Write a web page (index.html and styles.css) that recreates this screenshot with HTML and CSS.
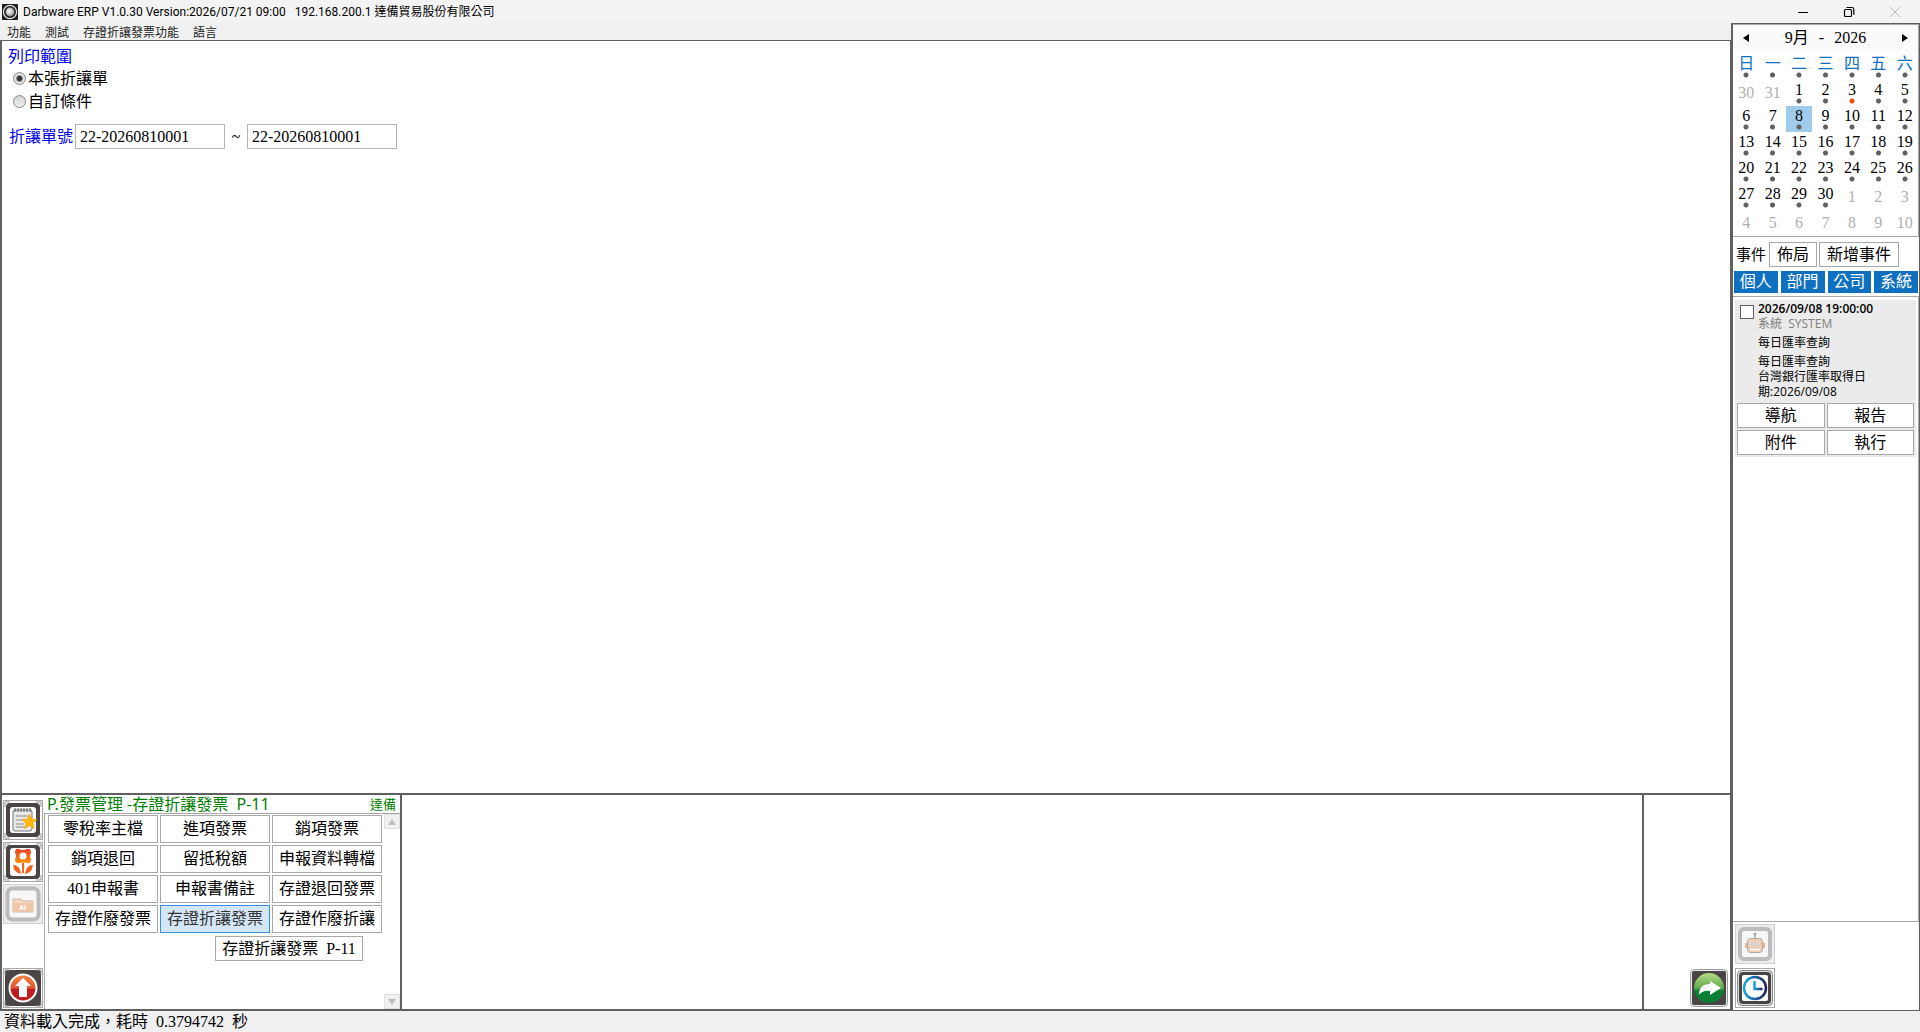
FILE: index.html
```html
<!DOCTYPE html>
<html lang="zh-Hant">
<head>
<meta charset="utf-8">
<title>Darbware ERP</title>
<link rel="stylesheet" href="styles.css">
</head>
<body>
<div class="app">
  <header class="titlebar">
    <svg class="app-icon" viewBox="0 0 16 16" aria-hidden="true">
      <defs><radialGradient id="ball" cx=".4" cy=".4" r=".6"><stop offset="0" stop-color="#fff"/><stop offset="1" stop-color="#999"/></radialGradient></defs>
      <rect width="16" height="16" rx="1" fill="#1c1c1c"/><circle cx="8" cy="8" r="6.600" fill="none" stroke="#ddd" stroke-width="1.300"/><circle cx="8" cy="8" r="4.400" fill="url(#ball)"/>
    </svg>
    <span class="title-text">Darbware ERP V1.0.30 Version:2026/07/21 09:00 &nbsp; 192.168.200.1 達備貿易股份有限公司</span>
    <div class="window-controls">
      <button aria-label="最小化"><svg viewBox="0 0 12 12"><path d="M1 6.500h10" stroke="#000"/></svg></button>
      <button aria-label="還原"><svg viewBox="0 0 12 12" fill="none" stroke="#000" stroke-width="1.2"><rect x="1.500" y="3.500" width="7" height="7" rx="1"/><path d="M3.500 1.500h5.500a1.800 1.800 0 0 1 1.800 1.800v5.500"/></svg></button>
      <button aria-label="關閉"><svg viewBox="0 0 12 12"><path d="M1 1l10 10M11 1L1 11" stroke="#bbb"/></svg></button>
    </div>
  </header>

  <div class="workspace">
    <div class="left">
      <nav class="menubar">
        <button>功能</button><button>測試</button><button>存證折讓發票功能</button><button>語言</button>
      </nav>
      <main class="form-pane">
        <fieldset class="scope">
          <legend>列印範圍</legend>
          <label class="choice"><input type="radio" name="scope" checked>本張折讓單</label>
          <label class="choice"><input type="radio" name="scope">自訂條件</label>
        </fieldset>
        <div class="range">
          <label for="from">折讓單號</label>
          <input id="from" type="text" value="22-20260810001">
          <span class="tilde">~</span>
          <input id="to" type="text" value="22-20260810001" aria-label="折讓單號迄">
        </div>
      </main>
      <section class="dock">
        <div class="module">
          <div class="tools">
            <button class="tool" aria-label="記事"><svg viewBox="0 0 38 38">
              <path class="corners" d="M1 6V1h5M32 1h5v5M37 32v5h-5M6 37H1v-5"/>
              <rect x="2" y="2" width="34" height="34" rx="4" fill="#4a4444"/><rect x="6" y="6" width="26" height="26" rx="3" fill="#fff"/>
              <rect x="9" y="9" width="19" height="21" rx="2" fill="#e9e9e9" stroke="#777"/>
              <path d="M11 7v4M14 7v4M17 7v4M20 7v4M23 7v4M26 7v4" stroke="#555"/>
              <path d="M12 15h12M12 19h10M12 23h8M12 26h11" stroke="#aaa" stroke-width="1.5"/>
              <path d="M25.500 13l2 5 5.500.5-4 3.700 1.300 5.300-4.800-2.700-4.800 2.700 1.300-5.300-4-3.700 5.500-.5z" fill="#ffb60d" stroke="#f2a100" stroke-width=".6"/></svg></button>
            <button class="tool" aria-label="花卉"><svg viewBox="0 0 38 38">
              <defs><linearGradient id="flower" x2="0" y2="1"><stop offset="0" stop-color="#e8402a"/><stop offset="1" stop-color="#ff9408"/></linearGradient></defs>
              <path class="corners" d="M1 6V1h5M32 1h5v5M37 32v5h-5M6 37H1v-5"/>
              <rect x="2" y="2" width="34" height="34" rx="4" fill="#4a4444"/><rect x="6" y="5" width="26" height="28" rx="3" fill="#fff"/>
              <path fill="url(#flower)" fill-rule="evenodd" d="M15 6q4 2 8 0 4-1 4 4-2 3 0 6 0 5-4 4-4-1-8 0-4 1-4-4 2-3 0-6 0-5 4-4zM19 9.500a3.500 3.500 0 1 0 0 7 3.500 3.500 0 1 0 0-7z"/>
              <path fill="#f4621c" d="M18 20h2v10h-2zM17 31Q10 30 9 22q7 0 8 9zM21 31q1-9 8-9-1 8-8 9z"/></svg></button>
            <button class="tool" disabled aria-label="AI 資料夾"><svg viewBox="0 0 38 38">
              <rect width="38" height="38" fill="#ececec"/><rect x="3.500" y="3.500" width="31" height="31" rx="5" fill="#f7f7f7" stroke="#bcbcbc" stroke-width="4"/>
              <path d="M9 14h8l2 2h10v11H9z" fill="#f3d5c0" stroke="#d5b8a4"/><path d="M9 18h20v9H9z" fill="#efc6a8"/>
              <text x="15" y="25" font-size="7" font-family="Liberation Sans, sans-serif" font-weight="bold" fill="#fff">AI</text></svg></button>
            <button class="tool up" aria-label="返回上層"><svg viewBox="0 0 38 38">
              <defs><linearGradient id="red" x2="0" y2="1"><stop offset="0" stop-color="#ef8a48"/><stop offset=".5" stop-color="#e55330"/><stop offset=".55" stop-color="#bd1e22"/><stop offset="1" stop-color="#c01c22"/></linearGradient></defs>
              <rect x="1" y="1" width="36" height="36" rx="2" fill="#4a4444"/>
              <path class="corners" d="M1 6V1h5M32 1h5v5M37 32v5h-5M6 37H1v-5"/>
              <circle cx="19" cy="19" r="13.500" fill="url(#red)" stroke="#fff" stroke-width="2"/>
              <path d="M19 9l8 8h-4v11h-8V17h-4z" fill="#fff"/></svg></button>
          </div>
          <div class="module-body">
            <div class="module-head"><h2>P.發票管理 -存證折讓發票 &nbsp;P-11</h2><span>達備</span></div>
            <div class="module-list">
              <div class="module-main">
                <div class="module-grid">
                  <button>零稅率主檔</button><button>進項發票</button><button>銷項發票</button>
                  <button>銷項退回</button><button>留抵稅額</button><button>申報資料轉檔</button>
                  <button>401申報書</button><button>申報書備註</button><button>存證退回發票</button>
                  <button>存證作廢發票</button>
                  <div class="current-cell"><button class="current">存證折讓發票</button><span class="tooltip" role="tooltip">存證折讓發票 &nbsp;P-11</span></div>
                  <button>存證作廢折讓</button>
                </div>
              </div>
              <div class="scrollbar">
                <button aria-label="向上"><svg viewBox="0 0 8 6"><path d="M0 6l4-6 4 6z" fill="#bcbcbc"/></svg></button>
                <button aria-label="向下"><svg viewBox="0 0 8 6"><path d="M0 0l4 6 4-6z" fill="#bcbcbc"/></svg></button>
              </div>
            </div>
          </div>
        </div>
        <div class="dock-middle"></div>
        <div class="dock-action">
          <button class="go" aria-label="執行"><svg viewBox="0 0 38 38">
            <defs><linearGradient id="green" x2="0" y2="1"><stop offset="0" stop-color="#b5da88"/><stop offset=".48" stop-color="#67ae54"/><stop offset=".6" stop-color="#0c8034"/><stop offset="1" stop-color="#087c39"/></linearGradient></defs>
            <rect x=".5" y=".5" width="37" height="37" rx="4" fill="#eee" stroke="#999"/><rect x="2" y="2" width="34" height="34" rx="2" fill="#4a4444"/>
            <circle cx="19" cy="19" r="15" fill="url(#green)"/>
            <path d="M9 26q0-11 11-11v-3l11 7-11 7v-4q-7-1-11 4z" fill="#fff"/></svg></button>
        </div>
      </section>
    </div>

    <aside class="side">
      <section class="calendar">
        <div class="cal-head">
          <button aria-label="上個月"><svg viewBox="0 0 6 8"><path d="M6 0L0 4l6 4z"/></svg></button>
          <span class="cal-title"><span>9月</span><span>-</span><span>2026</span></span>
          <button aria-label="下個月"><svg viewBox="0 0 6 8"><path d="M0 0l6 4-6 4z"/></svg></button>
        </div>
        <table>
          <thead><tr><th>日</th><th>一</th><th>二</th><th>三</th><th>四</th><th>五</th><th>六</th></tr></thead>
          <tbody>
            <tr><td class="out">30</td><td class="out">31</td><td>1</td><td>2</td><td class="today">3</td><td>4</td><td>5</td></tr>
            <tr><td>6</td><td>7</td><td class="picked">8</td><td>9</td><td>10</td><td>11</td><td>12</td></tr>
            <tr><td>13</td><td>14</td><td>15</td><td>16</td><td>17</td><td>18</td><td>19</td></tr>
            <tr><td>20</td><td>21</td><td>22</td><td>23</td><td>24</td><td>25</td><td>26</td></tr>
            <tr><td>27</td><td>28</td><td>29</td><td>30</td><td class="out">1</td><td class="out">2</td><td class="out">3</td></tr>
            <tr><td class="out">4</td><td class="out">5</td><td class="out">6</td><td class="out">7</td><td class="out">8</td><td class="out">9</td><td class="out">10</td></tr>
          </tbody>
        </table>
      </section>
      <div class="event-bar"><span>事件</span><button>佈局</button><button>新增事件</button></div>
      <div class="tabs"><button>個人</button><button>部門</button><button>公司</button><button>系統</button></div>
      <section class="events">
        <article class="event">
          <div class="event-info">
            <input type="checkbox" id="ev" aria-label="完成">
            <div class="event-text">
              <label class="when" for="ev">2026/09/08 19:00:00</label>
              <p class="who">系統 &nbsp;SYSTEM</p>
              <p class="subject">每日匯率查詢</p>
              <p>每日匯率查詢<br>台灣銀行匯率取得日<br>期:2026/09/08</p>
            </div>
          </div>
          <div class="event-actions"><button>導航</button><button>報告</button><button>附件</button><button>執行</button></div>
        </article>
      </section>
      <div class="side-tools">
        <button class="tool" disabled aria-label="助理"><svg viewBox="0 0 38 38">
          <rect width="38" height="38" fill="#ececec"/><rect x="4" y="4" width="30" height="30" rx="4" fill="#f7f7f7" stroke="#bcbcbc" stroke-width="4"/>
          <path d="M19 14V9" stroke="#aaa" stroke-width="1.500"/><circle cx="19" cy="9" r="1.500" fill="#aaa"/>
          <path d="M9 18h3v5H9zM26 18h3v5h-3z" fill="#efb592"/>
          <rect x="11.500" y="13.500" width="15" height="14" rx="3" fill="#f0cdb3" stroke="#aaa"/>
          <circle cx="16" cy="19" r="2" fill="#fff" stroke="#ccc"/><circle cx="22" cy="19" r="2" fill="#fff" stroke="#ccc"/><circle cx="16" cy="19" r=".8" fill="#888"/><circle cx="22" cy="19" r=".8" fill="#888"/><path d="M14 24.500h10" stroke="#fff" stroke-width="1.500"/></svg></button>
        <button class="tool" aria-label="時鐘"><svg viewBox="0 0 38 38">
          <defs><linearGradient id="clock"><stop offset="0" stop-color="#16a8e0"/><stop offset="1" stop-color="#1b1f5c"/></linearGradient></defs>
          <rect x="1.500" y="1.500" width="35" height="35" rx="4" fill="#ddd" stroke="#888"/><rect x="3" y="3" width="32" height="32" rx="4" fill="#4a4444"/><rect x="6" y="6" width="26" height="26" rx="2" fill="#fff"/>
          <circle cx="19" cy="19" r="11" fill="#fff" stroke="url(#clock)" stroke-width="2.500"/>
          <path d="M18.500 12v8h8" fill="none" stroke="url(#clock)" stroke-width="2.500"/></svg></button>
      </div>
    </aside>
  </div>
  <footer class="status">資料載入完成，耗時 &nbsp;0.3794742 &nbsp;秒</footer>
</div>
</body>
</html>
```
FILE: styles.css
```css
* { box-sizing: border-box; margin: 0; padding: 0; }

body {
  font: 16px/20px "Liberation Serif", "Noto Sans CJK TC", serif;
  color: #000;
  background: #fff;
}

button, input { font: inherit; color: inherit; border-radius: 0; }
button { background: #fff; border: 1px solid #a8a8a8; }
svg { display: block; }

.app { display: flex; flex-direction: column; min-height: 100vh; }

/* Title bar */
.titlebar {
  display: flex;
  align-items: center;
  height: 23px;
  padding-left: 2px;
  gap: 5px;
  background: #f3f3f3;
  font: 12px/20px Roboto, "Noto Sans CJK TC", sans-serif;
}
.app-icon { width: 16px; height: 16px; }
.window-controls { display: flex; margin-left: auto; padding-right: 2px; }
.window-controls button {
  display: grid;
  place-items: center;
  width: 46px;
  height: 20px;
  border: 0;
  background: none;
}
.window-controls svg { width: 12px; height: 12px; }

.workspace { display: flex; flex: 1; }
.left { display: flex; flex: 1; flex-direction: column; min-width: 0; }

.menubar {
  display: flex;
  gap: 14px;
  height: 17px;
  padding: 0 7px;
  background: #f0f0f0;
}
.menubar button {
  border: 0;
  background: none;
  color: #222;
  font: 12px/16px "Noto Sans CJK TC", sans-serif;
}

/* Print range form */
.form-pane {
  flex: 1;
  padding: 6px;
  border: solid #606060;
  border-width: 1px 1px 0 2px;
}
.scope { border: 0; padding-bottom: 11px; }
.scope legend { color: #0000f0; }
.choice { display: flex; align-items: center; gap: 2px; height: 23px; padding-left: 5px; }
.choice input {
  appearance: none;
  width: 13px;
  height: 13px;
  border: 1px solid #888;
  border-radius: 50%;
  background: linear-gradient(#d4d4d4, #f0f0f0);
}
.choice input:checked { background: radial-gradient(circle, #333 0 2px, #e4e4e4 4px); }
.range { display: flex; align-items: center; padding-left: 1px; }
.range label { width: 66px; color: #0000f0; }
.range input { width: 150px; height: 25px; padding: 0 4px; border: 1px solid #b4b4b4; }
.tilde { width: 22px; text-align: center; }

/* Bottom dock */
.dock {
  display: flex;
  height: 218px;
  border: solid #606060;
  border-width: 2px 1px 2px 2px;
}
.module { display: flex; width: 400px; border-right: 2px solid #606060; }
.tools { display: flex; flex-direction: column; gap: 2px; width: 42px; padding: 5px 1px 1px; }
.tool { width: 40px; height: 40px; }
.tool:disabled { border-color: #d0d0d0; }
.corners { fill: none; stroke: #999; }
.up { margin-top: auto; }
.module-body { display: flex; flex: 1; flex-direction: column; }
.module-head {
  display: flex;
  justify-content: space-between;
  height: 18px;
  padding: 0 4px 0 3px;
  color: #008000;
  font: 13px/18px "Noto Sans CJK TC", sans-serif;
}
.module-head h2 { font: 16px/18px "Noto Sans", "Noto Sans CJK TC", sans-serif; }
.module-list { display: flex; flex: 1; border: solid #a8a8a8; border-width: 1px 0 0 1px; }
.module-main { flex: 1; padding: 1px 2px 1px 3px; }
.module-grid { display: grid; grid-template-columns: repeat(3, 1fr); gap: 2px; }
.module-grid button { width: 100%; height: 28px; }
.current-cell { position: relative; }
.module-grid .current { border-color: #3390e8; background: #d5e7f7; color: #333; }
.tooltip {
  position: absolute;
  top: 31px;
  left: 55px;
  width: 148px;
  border: 1px solid #a8a8a8;
  background: #fff;
  line-height: 23px;
  text-align: center;
  white-space: nowrap;
}
.scrollbar { display: flex; flex-direction: column; justify-content: space-between; width: 16px; }
.scrollbar button {
  display: grid;
  place-items: center;
  height: 15px;
  border-color: #e0e0e0;
  background: #f0f0f0;
}
.scrollbar svg { width: 8px; height: 6px; }
.dock-middle { flex: 1; }
.dock-action {
  display: flex;
  align-items: flex-end;
  justify-content: flex-end;
  width: 88px;
  padding: 2px;
  border-left: 2px solid #606060;
}
.go { width: 38px; height: 38px; border: 0; }

/* Side panel */
.side {
  display: flex;
  flex-direction: column;
  width: 189px;
  border: 1px solid #606060;
  border-left-width: 2px;
}
.calendar { border: solid #a8a8a8; border-width: 1px 1px 1px 0; }
.cal-head {
  display: flex;
  align-items: center;
  justify-content: space-between;
  height: 26px;
  padding: 0 10px;
  background: #fafafa;
}
.cal-head button { border: 0; background: none; }
.cal-head svg { width: 6px; height: 8px; }
.cal-title { display: flex; gap: 10px; }
.calendar table { width: 100%; margin-top: 3px; table-layout: fixed; border-collapse: collapse; }
.calendar th, .calendar td {
  height: 26px;
  padding-bottom: 7px;
  text-align: center;
  line-height: 18px;
  background: radial-gradient(circle at 50% 21px, #606060 2px, transparent 3px);
}
.calendar th { color: #1070c0; font-weight: 400; }
.calendar .today { background: radial-gradient(circle at 50% 21px, #f04c00 2px, transparent 3px); }
.calendar .picked { background: radial-gradient(circle at 50% 21px, #606060 2px, #a0ccec 3px); }
.calendar .out { padding: 0 0 1px; color: #b0b0b0; background: none; }

.event-bar { display: flex; align-items: center; gap: 2px; padding: 5px 3px 4px; }
.event-bar span { width: 31px; white-space: nowrap; font-size: 15px; }
.event-bar button { width: 80px; height: 25px; }
.event-bar span + button { width: 48px; }
.tabs { display: grid; grid-template-columns: repeat(4, 1fr); gap: 3px; padding: 0 1px 3px; }
.tabs button { height: 22px; border: 0; background: #1070c0; color: #fff; line-height: 22px; }

.events { flex: 1; padding: 3px 2px; border: solid #a8a8a8; border-width: 1px 1px 1px 0; }
.event {
  padding: 1px 2px 2px;
  background: #ebebeb;
  font: 12px/15px "Open Sans", "Noto Sans CJK TC", sans-serif;
}
.event-info { display: flex; gap: 4px; padding: 0 2px 4px 3px; }
.event-info input {
  appearance: none;
  width: 14px;
  height: 14px;
  margin-top: 4px;
  border: 1px solid #606060;
  background: #fff;
}
.event-text { flex: 1; }
.when { display: block; font-weight: 600; }
.who { color: #808080; }
.subject { padding: 4px 0; }
.event-actions { display: grid; grid-template-columns: 1fr 1fr; gap: 2px; }
.event-actions button { height: 25px; font: 16px/20px "Liberation Serif", "Noto Sans CJK TC", serif; }
.side-tools { display: flex; flex-direction: column; gap: 4px; padding: 2px; }

.status { height: 21px; padding-left: 4px; background: #f0f0f0; line-height: 22px; }
```
